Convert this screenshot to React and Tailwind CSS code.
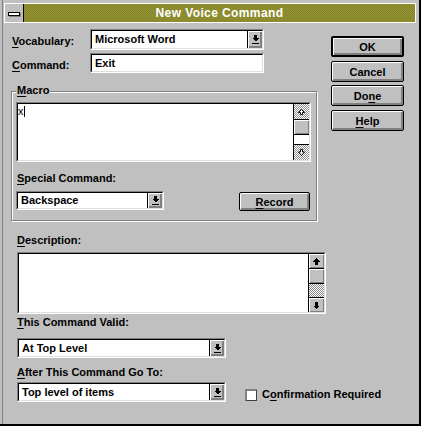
import React from "react";

const Ul = ({ children }) => (
  <span className="underline decoration-1 underline-offset-[2px]">{children}</span>
);

function Sunken({ className = "", innerClassName = "", children }) {
  return (
    <div className={`border border-[#808080] border-r-white border-b-white ${className}`}>
      <div className={`w-full h-full border border-black border-r-[#dfdfdf] border-b-[#dfdfdf] bg-white flex ${innerClassName}`}>
        {children}
      </div>
    </div>
  );
}

const DropIcon = () => (
  <svg width="7" height="9" viewBox="0 0 7 9" shapeRendering="crispEdges">
    <rect x="2" y="0" width="3" height="3" fill="#000" />
    <polygon points="0,3 7,3 3.5,6.5" fill="#000" />
    <rect x="0" y="8" width="7" height="1" fill="#000" />
  </svg>
);

function Combo({ className = "", text }) {
  return (
    <Sunken className={className}>
      <div className="flex-1 flex items-center pl-[3px] whitespace-nowrap overflow-hidden">{text}</div>
      <div className="w-[15px] h-full border-l border-black bg-[#c0c0c0] shadow-[inset_1px_1px_0_#fff,inset_-1px_-1px_0_#808080,inset_-2px_-2px_0_#808080] flex items-center justify-center">
        <DropIcon />
      </div>
    </Sunken>
  );
}

function Btn({ className = "", def = false, children }) {
  return (
    <div
      className={`${def ? "border-2" : "border"} border-black rounded-[2px] bg-[#c0c0c0] shadow-[inset_1px_1px_0_#fff,inset_-1px_-1px_0_#808080,inset_-2px_-2px_0_#808080] flex items-center justify-center pt-[1px] whitespace-nowrap ${className}`}
    >
      {children}
    </div>
  );
}

const HollowUp = () => (
  <svg width="7" height="6" viewBox="0 0 7 6">
    <path d="M3.5 0.5L6.5 3.5H4.5V5.5H2.5V3.5H0.5Z" fill="#fff" stroke="#000" strokeWidth="1" />
  </svg>
);
const HollowDown = () => (
  <svg width="7" height="7" viewBox="0 0 7 7">
    <path d="M2.5 0.5H4.5V3H6.5L3.5 6.5L0.5 3H2.5Z" fill="#fff" stroke="#000" strokeWidth="1" />
  </svg>
);
const SolidUp = () => (
  <svg width="7" height="7" viewBox="0 0 7 7" shapeRendering="crispEdges">
    <path d="M3.5 0L7 3.5H5V7H2V3.5H0Z" fill="#000" />
  </svg>
);
const SolidDown = () => (
  <svg width="7" height="7" viewBox="0 0 7 7" shapeRendering="crispEdges">
    <path d="M2 0H5V3.5H7L3.5 7L0 3.5H2Z" fill="#000" />
  </svg>
);

export default function App() {
  return (
    <div className="w-[421px] h-[426px] bg-[#c0c0c0] border-r-2 border-b-2 border-black shadow-[inset_2px_0_0_#c0c0c0,inset_3px_0_0_#808080] font-['Liberation_Sans',Arial,sans-serif] font-bold text-[11px] leading-[13px] text-black overflow-hidden select-none">
      {/* Title bar */}
      <div className="pt-[3px] pl-[4px] pr-[3px]">
        <div className="h-[20px] border border-white flex">
          <div className="w-[19px] h-full border-r border-black bg-[#c0c0c0] flex items-center justify-center">
            <div className="w-[12px] h-[4px] bg-white border border-black shadow-[1px_1px_0_#808080] mt-[1px]" />
          </div>
          <div className="flex-1 h-full bg-[#888830] bg-[repeating-conic-gradient(#9a9a00_0_25%,#7e7e5c_0_50%)] bg-[length:2px_2px] bg-size-[2px_2px] flex items-center justify-center text-white text-[12px] tracking-[0.4px] pt-[1px]">
            New Voice Command
          </div>
        </div>
      </div>

      {/* Body */}
      <div className="pl-[12px] pt-[6px]">
        <div className="flex">
          {/* Left top column */}
          <div className="w-[314px] flex flex-col">
            <div className="flex h-[21px]">
              <div className="w-[78px] pt-[6px] whitespace-nowrap">
                <Ul>V</Ul>ocabulary:
              </div>
              <Combo className="w-[174px] h-[21px]" text="Microsoft Word" />
            </div>
            <div className="flex h-[20px] mt-[3px]">
              <div className="w-[78px] pt-[6px] whitespace-nowrap">
                <Ul>C</Ul>ommand:
              </div>
              <Sunken className="w-[174px] h-[20px]" innerClassName="items-center pl-[3px]">
                Exit
              </Sunken>
            </div>

            {/* Macro group */}
            <div className="relative -ml-[1px] mt-[18px] w-[306px] h-[130px] border border-[#808080] shadow-[inset_1px_1px_0_#fff,1px_1px_0_#fff] pl-[4px] pt-[10px] flex flex-col">
              <div className="absolute left-[4px] -top-[8px] px-[1px] bg-[#c0c0c0]">
                <Ul>M</Ul>acro
              </div>
              <Sunken className="w-[295px] h-[60px]">
                <div className="flex-1 flex items-start pt-[1px]">
                  <span className="font-normal">x</span>
                  <span className="w-[1px] h-[11px] bg-black mt-[1px]" />
                </div>
                <div className="w-[16px] h-full border-l border-black flex flex-col">
                  <div className="h-[16px] border-b border-black bg-[repeating-conic-gradient(#909090_0_25%,#ffffff_0_50%)] bg-[length:2px_2px] bg-size-[2px_2px] flex items-center justify-center">
                    <HollowUp />
                  </div>
                  <div className="h-[15px] border-b border-black bg-[#c0c0c0] shadow-[inset_1px_1px_0_#fff,inset_-1px_-1px_0_#808080]" />
                  <div className="flex-1 bg-white" />
                  <div className="h-[16px] border-t border-black bg-[repeating-conic-gradient(#909090_0_25%,#ffffff_0_50%)] bg-[length:2px_2px] bg-size-[2px_2px] flex items-center justify-center">
                    <HollowDown />
                  </div>
                </div>
              </Sunken>
              <div className="mt-[10px] ml-[1px] whitespace-nowrap">
                <Ul>S</Ul>pecial Command:
              </div>
              <div className="flex mt-[6px]">
                <Combo className="w-[148px] h-[19px]" text="Backspace" />
                <Btn className="ml-[75px] mt-[1px] w-[71px] h-[19px]">
                  <Ul>R</Ul>ecord
                </Btn>
              </div>
            </div>
          </div>

          {/* Buttons column */}
          <div className="ml-[5px] w-[73px] flex flex-col pt-[7px]">
            <Btn def className="h-[21px]">OK</Btn>
            <Btn className="h-[21px] mt-[4px]">Cancel</Btn>
            <Btn className="h-[21px] mt-[3px]">
              Do<Ul>n</Ul>e
            </Btn>
            <Btn className="h-[21px] mt-[4px]">
              <Ul>H</Ul>elp
            </Btn>
          </div>
        </div>

        {/* Lower section */}
        <div className="flex flex-col pl-[5px]">
          <div className="mt-[13px] whitespace-nowrap">
            <Ul>D</Ul>escription:
          </div>
          <Sunken className="mt-[5px] w-[309px] h-[62px]">
            <div className="flex-1" />
            <div className="w-[16px] h-full border-l border-black flex flex-col">
              <div className="h-[15px] border-b border-black bg-[#c0c0c0] shadow-[inset_1px_1px_0_#fff,inset_-1px_-1px_0_#808080] flex items-center justify-center">
                <SolidUp />
              </div>
              <div className="h-[15px] border-b border-black bg-[#c0c0c0] shadow-[inset_1px_1px_0_#fff,inset_-1px_-1px_0_#808080]" />
              <div className="flex-1 bg-[repeating-conic-gradient(#8a8a8a_0_25%,#ffffff_0_50%)] bg-[length:2px_2px] bg-size-[2px_2px]" />
              <div className="h-[15px] border-t border-black bg-[#c0c0c0] shadow-[inset_1px_1px_0_#fff,inset_-1px_-1px_0_#808080] flex items-center justify-center">
                <SolidDown />
              </div>
            </div>
          </Sunken>
          <div className="mt-[2px] whitespace-nowrap">
            <Ul>T</Ul>his Command Valid:
          </div>
          <Combo className="mt-[9px] w-[209px] h-[20px]" text="At Top Level" />
          <div className="mt-[8px] whitespace-nowrap">
            <Ul>A</Ul>fter This Command Go To:
          </div>
          <div className="mt-[3px] flex">
            <Combo className="w-[209px] h-[20px]" text="Top level of items" />
            <div className="ml-[19px] mt-[7px] w-[12px] h-[12px] bg-white border-l-2 border-t-2 border-[#808080] border-r border-b border-r-[#404040] border-b-[#404040]" />
            <div className="ml-[5px] mt-[6px] whitespace-nowrap">
              C<Ul>o</Ul>nfirmation Required
            </div>
          </div>
        </div>
      </div>
    </div>
  );
}
